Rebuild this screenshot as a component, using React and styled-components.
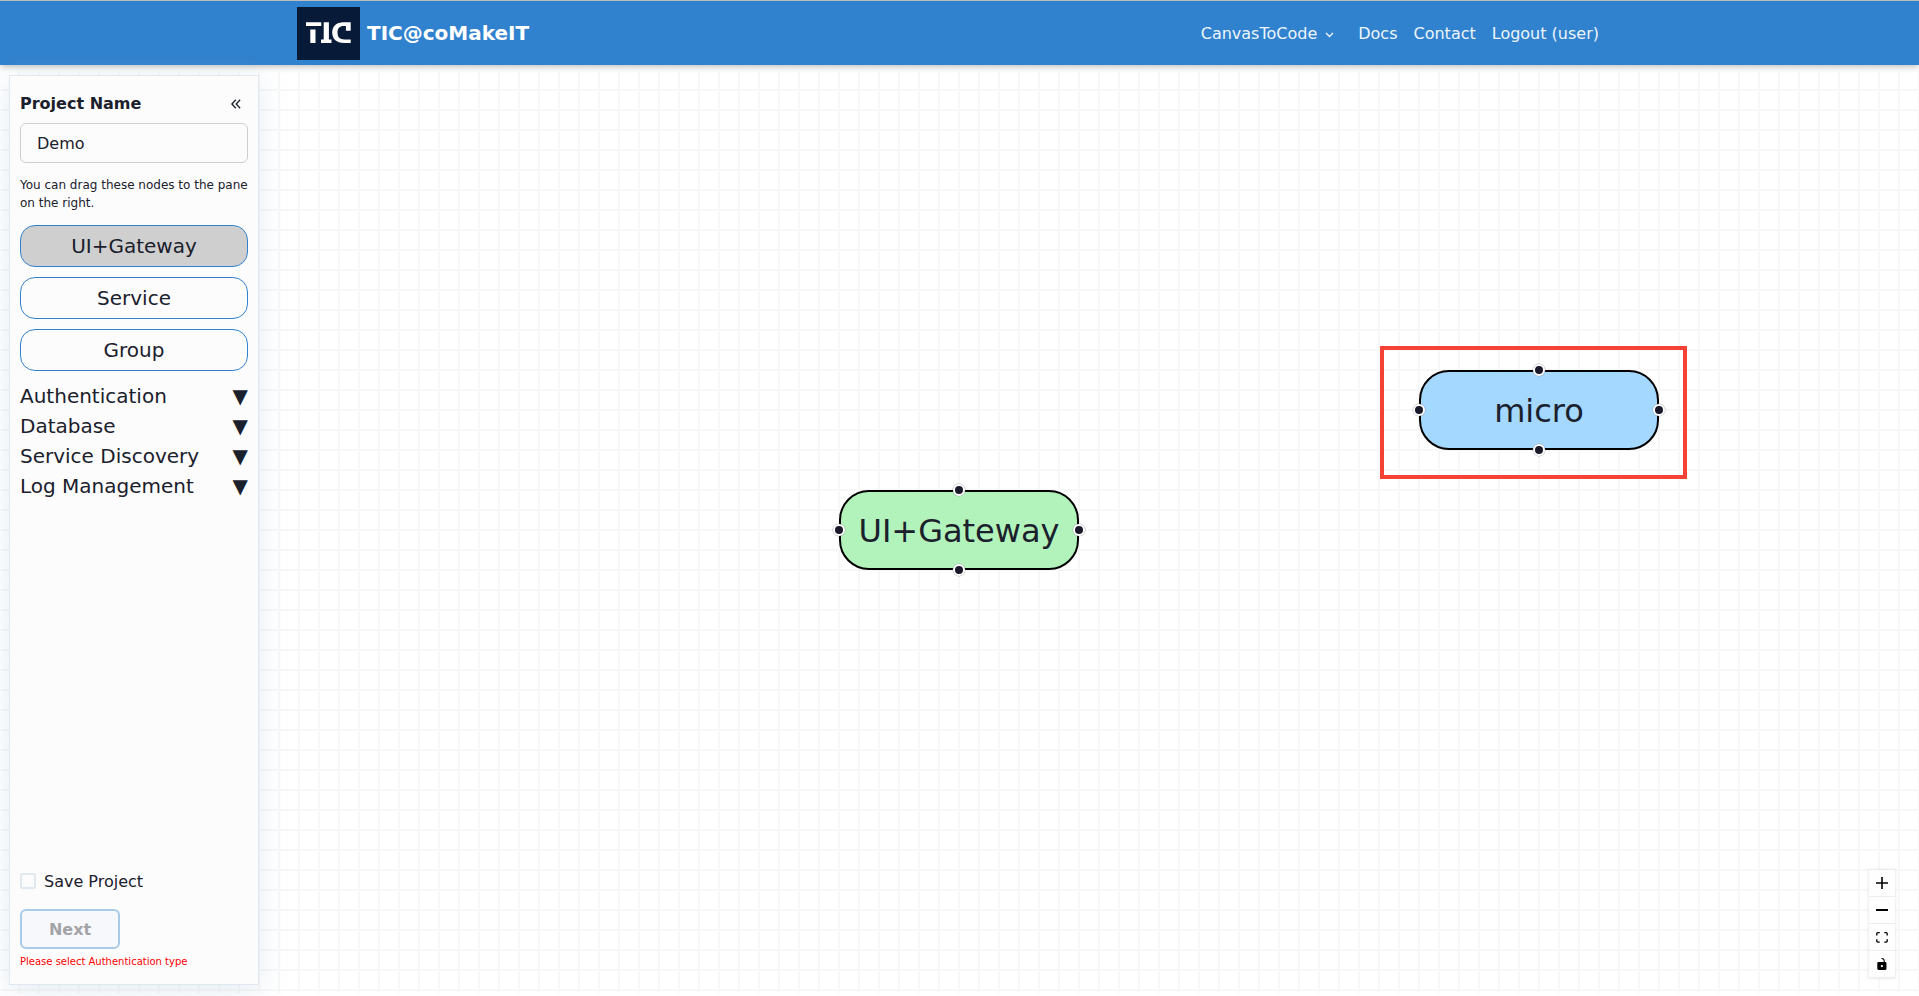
import React from "react";
import styled, { createGlobalStyle } from "styled-components";

const Global = createGlobalStyle`
  *, *::before, *::after { box-sizing: border-box; }
  html, body { margin: 0; padding: 0; }
  body {
    font-family: "DejaVu Sans", sans-serif;
    font-size: 16px;
    line-height: 24px;
    color: #1a202c;
    background: #fff;
    overflow: hidden;
  }
`;

const Page = styled.div`
  height: 996px;
  display: flex;
  flex-direction: column;
`;

const Header = styled.header`
  flex: none;
  height: 65px;
  border-top: 1px solid #bdbdbd;
  background: #3182ce;
  box-shadow: 0 4px 6px -1px rgba(0, 0, 0, 0.16), 0 2px 4px -1px rgba(0, 0, 0, 0.08);
  padding: 0 320px 0 297px;
  display: flex;
  align-items: center;
  justify-content: space-between;
  color: #fff;
`;

const Brand = styled.div`
  display: flex;
  align-items: center;
  gap: 7px;
  font-size: 20px;
  font-weight: 700;
`;

const LogoBox = styled.div`
  width: 63px;
  height: 53px;
  margin-top: 1px;
  background: #071a38;
`;

const Nav = styled.nav`
  display: flex;
  align-items: center;
  gap: 16px;
  padding-top: 2px;
  color: #edf5fc;
`;

const NavItem = styled.span`
  display: flex;
  align-items: center;
  white-space: nowrap;
  svg { margin: 2px 8px 0 8px; }
`;

const Workspace = styled.main`
  flex: 1;
  margin: 5px 0 3px 1px;
  padding: 5px 0 8px 8px;
  display: flex;
  justify-content: space-between;
  align-items: stretch;
  position: relative;
  background-image:
    linear-gradient(to right, #f7f7f7 2px, transparent 2px),
    linear-gradient(to bottom, #f7f7f7 2px, transparent 2px);
  background-size: 20px 20px;
  background-position: 17px 0, 0 19px;
`;

const Sidebar = styled.aside`
  width: 250px;
  border: 1px solid #e2e8f0;
  background: #fcfcfc;
  box-shadow: 0 5px 26px rgba(150, 180, 210, 0.26);
  padding: 16px 10px 14px;
  display: flex;
  flex-direction: column;
`;

const TitleRow = styled.div`
  display: flex;
  align-items: center;
  justify-content: space-between;
  font-weight: 700;
  padding-right: 7px;
  height: 24px;
`;

const Input = styled.input`
  display: block;
  width: 100%;
  height: 40px;
  margin-top: 7px;
  padding: 0 16px;
  border: 1px solid #cfcfcf;
  border-radius: 6px;
  background: #fcfcfc;
  color: inherit;
  font: inherit;
  outline: none;
`;

const Hint = styled.p`
  margin: 13px 0;
  font-size: 12px;
  line-height: 18px;
  white-space: nowrap;
`;

const Palette = styled.div`
  display: flex;
  flex-direction: column;
  gap: 10px;
  margin-bottom: 10px;
`;

const PaletteNode = styled.div`
  height: 42px;
  border: 1px solid #3182ce;
  border-radius: 15px;
  background: ${(p) => (p.$used ? "#cfcfcf" : "#fcfcfc")};
  display: flex;
  align-items: center;
  justify-content: center;
  font-size: 20px;
`;

const Section = styled.div`
  display: flex;
  justify-content: space-between;
  font-size: 20px;
  line-height: 30px;
`;

const Footer = styled.div`
  margin-top: auto;
`;

const CheckRow = styled.label`
  display: flex;
  align-items: center;
  gap: 8px;
  height: 24px;
`;

const Box = styled.span`
  width: 16px;
  height: 16px;
  border: 2px solid #e2e8f0;
  border-radius: 2px;
`;

const CheckLabel = styled.span`
  padding-top: 2px;
`;

const NextButton = styled.button`
  display: block;
  width: 100px;
  height: 40px;
  margin: 16px 0 5px;
  padding: 2px 0 0;
  border: 2px solid #a9cbea;
  border-radius: 6px;
  background: #f7f8fb;
  color: #a3a4a8;
  font: inherit;
  font-weight: 600;
`;

const ErrorText = styled.p`
  margin: 0;
  font-size: 10px;
  line-height: 16px;
  color: #ff0000;
`;

const Node = styled.div`
  position: absolute;
  left: ${(p) => p.$x}px;
  top: ${(p) => p.$y}px;
  width: 240px;
  height: 80px;
  padding-top: 2px;
  border: 2px solid #000;
  border-radius: 30px;
  background: ${(p) => p.$color};
  display: flex;
  align-items: center;
  justify-content: center;
  font-size: 32px;
`;

const places = {
  top: "left: 118px; top: -2px;",
  bottom: "left: 118px; top: 78px;",
  left: "left: -2px; top: 38px;",
  right: "left: 238px; top: 38px;",
};

const Handle = styled.i`
  position: absolute;
  ${(p) => places[p.$side]}
  width: 12px;
  height: 12px;
  margin: -6px 0 0 -6px;
  border: 2px solid #fff;
  border-radius: 50%;
  background: #1a192b;
  box-shadow: 0 0 0 0.5px rgba(120, 120, 130, 0.5);
`;

const Highlight = styled.div`
  position: absolute;
  left: 1379px;
  top: 276px;
  width: 307px;
  height: 133px;
  border: 4px solid #f44336;
`;

const Controls = styled.div`
  align-self: flex-end;
  margin: 0 24px 7px 0;
  display: flex;
  flex-direction: column;
  box-shadow: 0 0 2px 1px rgba(0, 0, 0, 0.08);
`;

const ControlButton = styled.button`
  width: 26px;
  height: 27px;
  padding: 0;
  border: 0;
  border-bottom: 1px solid #eee;
  background: #fefefe;
  display: flex;
  align-items: center;
  justify-content: center;
`;

function Logo() {
  return (
    <svg width="63" height="53" viewBox="0 0 63 53" fill="#fff">
      <path d="M9 15.300h15.300v3.700H9zM13.300 22.500h5.200V36h-5.200zM26.700 15.300h5.200v17.200h2.600V36H24v-3.500h2.700z" />
      <path d="M53.700 15.300v8.400h-4.800V19H47c-4.500 0-6.500 2.300-6.500 6.600 0 4.500 2.300 6.900 7 6.900h6.200V36H47c-7.500 0-11.800-3.900-11.800-10.400 0-6.400 4.300-10.300 11.300-10.300z" />
    </svg>
  );
}

function FlowNode({ x, y, color, children }) {
  return (
    <Node $x={x} $y={y} $color={color}>
      {children}
      {Object.keys(places).map((s) => <Handle key={s} $side={s} />)}
    </Node>
  );
}

export default function App() {
  return (
    <Page>
      <Global />
      <Header>
        <Brand>
          <LogoBox><Logo /></LogoBox>
          TIC@coMakeIT
        </Brand>
        <Nav>
          <NavItem>
            CanvasToCode
            <svg width="9" height="6" viewBox="0 0 9 6" fill="none" stroke="#edf5fc" strokeWidth="1.4">
              <path d="M1 1l3.500 3.500L8 1" />
            </svg>
          </NavItem>
          <NavItem>Docs</NavItem>
          <NavItem>Contact</NavItem>
          <NavItem>Logout (user)</NavItem>
        </Nav>
      </Header>
      <Workspace>
        <Sidebar>
          <TitleRow>
            Project Name
            <svg width="10" height="10" viewBox="0 0 10 10" fill="none" stroke="#1a202c" strokeWidth="1.300">
              <path d="M4.800 .7L.9 5l3.900 4.300M9.100 .7L5.200 5l3.900 4.300" />
            </svg>
          </TitleRow>
          <Input defaultValue="Demo" />
          <Hint>You can drag these nodes to the pane<br />on the right.</Hint>
          <Palette>
            <PaletteNode $used>UI+Gateway</PaletteNode>
            <PaletteNode>Service</PaletteNode>
            <PaletteNode>Group</PaletteNode>
          </Palette>
          {["Authentication", "Database", "Service Discovery", "Log Management"].map((s) => (
            <Section key={s}><span>{s}</span><span>▼</span></Section>
          ))}
          <Footer>
            <CheckRow><Box /><CheckLabel>Save Project</CheckLabel></CheckRow>
            <NextButton>Next</NextButton>
            <ErrorText>Please select Authentication type</ErrorText>
          </Footer>
        </Sidebar>
        <FlowNode x={838} y={420} color="#b2f3bb">UI+Gateway</FlowNode>
        <Highlight />
        <FlowNode x={1418} y={300} color="#a5d8ff">micro</FlowNode>
        <Controls>
          <ControlButton>
            <svg width="12" height="12" viewBox="0 0 32 32"><path d="M32 18.133H18.133V32h-4.266V18.133H0v-4.266h13.867V0h4.266v13.867H32z" /></svg>
          </ControlButton>
          <ControlButton>
            <svg width="12" height="2" viewBox="0 0 12 2"><path d="M0 0h12v2H0z" /></svg>
          </ControlButton>
          <ControlButton>
            <svg width="12" height="11" viewBox="0 0 32 30"><path d="M3.692 4.630c0-.53.400-.938.939-.938h5.215V0H4.708C2.130 0 0 2.054 0 4.630v5.216h3.692V4.631zM27.354 0h-5.200v3.692h5.170c.530 0 .984.400.984.939v5.215H32V4.631A4.624 4.624 0 0027.354 0zm.954 24.830c0 .532-.400.940-.939.940h-5.215v3.768h5.215c2.577 0 4.631-2.130 4.631-4.707v-5.139h-3.692v5.139zm-23.677.940c-.531 0-.939-.400-.939-.940v-5.138H0v5.139c0 2.577 2.130 4.707 4.708 4.707h5.138V25.770H4.631z" /></svg>
          </ControlButton>
          <ControlButton>
            <svg width="10" height="12" viewBox="0 0 25 32"><path d="M21.333 10.667H19.810V7.619C19.810 3.429 16.380 0 12.190 0c-4.114 1.828-1.370 2.133.305 2.438 1.676.305 4.420 2.590 4.420 5.181v3.048H3.047A3.056 3.056 0 000 13.714v15.238A3.056 3.056 0 003.048 32h18.285a3.056 3.056 0 003.048-3.048V13.714a3.056 3.056 0 00-3.048-3.047zM12.190 24.533a3.056 3.056 0 01-3.047-3.047 3.056 3.056 0 013.047-3.048 3.056 3.056 0 013.048 3.048 3.056 3.056 0 01-3.048 3.047z" /></svg>
          </ControlButton>
        </Controls>
      </Workspace>
    </Page>
  );
}
